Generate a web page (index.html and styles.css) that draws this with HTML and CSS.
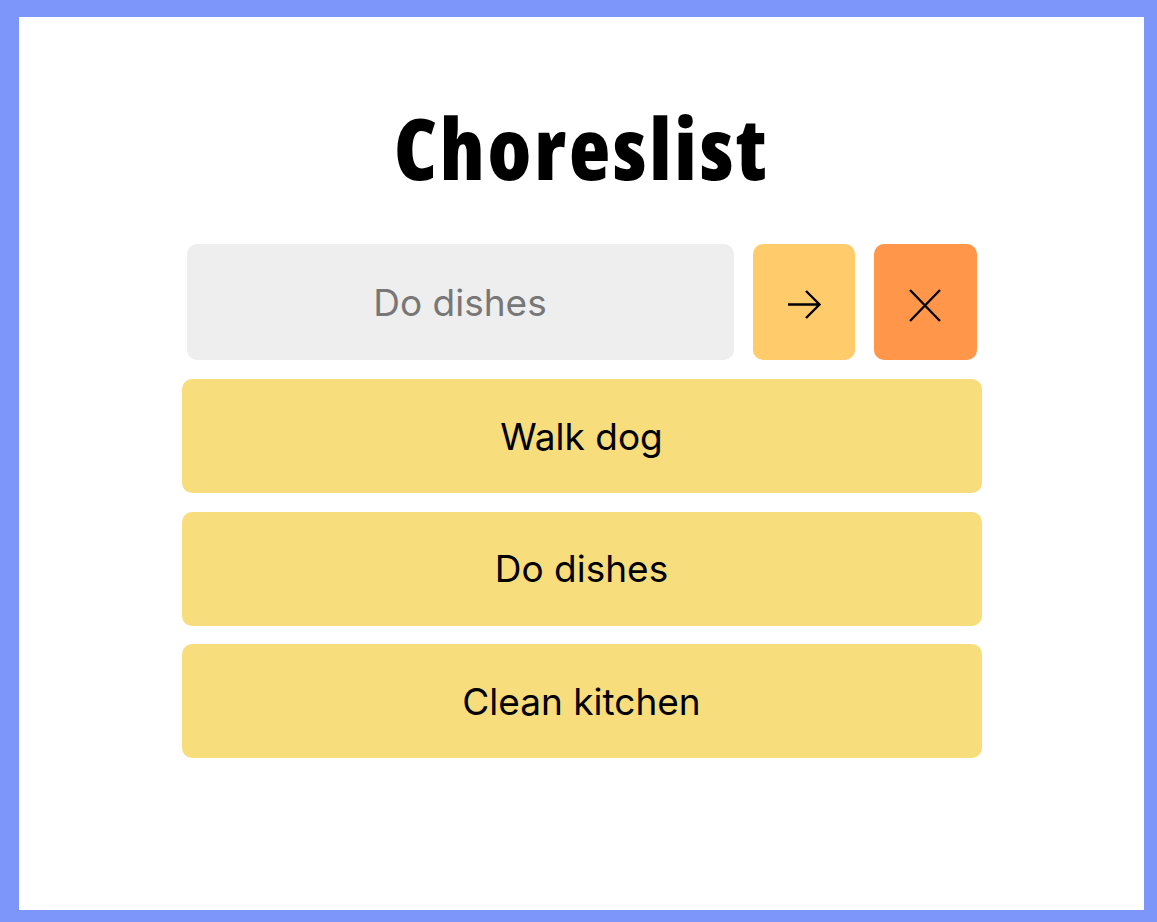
FILE: index.html
```html
<!DOCTYPE html>
<html lang="en">
<head>
<meta charset="utf-8">
<title>Choreslist</title>
<link rel="stylesheet" href="styles.css">
</head>
<body>
<main class="app">
  <h1 class="title">Choreslist</h1>
  <div class="entry">
    <input class="entry-input" type="text" placeholder="Do dishes">
    <button class="btn btn-add" aria-label="Add">
      <svg class="icon" width="40" height="40" viewBox="0 0 40 40" fill="none" stroke="#000" stroke-width="2.4" stroke-linecap="butt" stroke-linejoin="miter"><path d="M4 22.5h31M22 9l13.5 13.5L22 36"/></svg>
    </button>
    <button class="btn btn-clear" aria-label="Clear">
      <svg class="icon" width="40" height="40" viewBox="0 0 40 40" fill="none" stroke="#000" stroke-width="2.3" stroke-linecap="butt"><path d="M5 8l30 31M35 8L5 39"/></svg>
    </button>
  </div>
  <ul class="list">
    <li class="item">Walk dog</li>
    <li class="item">Do dishes</li>
    <li class="item">Clean kitchen</li>
  </ul>
</main>
</body>
</html>
```
FILE: styles.css
```css
* { box-sizing: border-box; }
html, body { margin: 0; padding: 0; }
body {
  width: 1157px;
  height: 922px;
  border-style: solid;
  border-color: #7c96fa;
  border-width: 17px 13px 12px 19px;
  background: #fff;
  font-family: Inter, "Noto Sans", sans-serif;
}
.app {
  width: 800px;
  margin: 0 auto;
  padding-top: 80px;
}
.title {
  margin: 0;
  text-align: center;
  font-family: "Open Sans", sans-serif;
  font-weight: 800;
  font-stretch: 82%;
  font-size: 85px;
  line-height: 100px;
  letter-spacing: 2.8px;
  color: #000;
}
.entry {
  display: flex;
  gap: 19px;
  margin: 47px 5px 0;
  height: 116px;
}
.entry-input {
  width: 547px;
  border: none;
  border-radius: 10px;
  background: #eeeeee;
  font-family: Inter, sans-serif;
  font-size: 37px;
  text-align: center;
  color: #000;
  outline: none;
  padding: 0;
}
.entry-input::placeholder { color: #777; }
.btn {
  flex: 1;
  border: none;
  border-radius: 10px;
  display: flex;
  align-items: center;
  justify-content: center;
  padding: 0;
}
.icon { overflow: visible; }
.btn-add { background: #ffcb6b; }
.btn-clear { background: #ff964a; }
.list {
  list-style: none;
  margin: 19px 0 0;
  padding: 0;
  display: flex;
  flex-direction: column;
  gap: 18.5px;
}
.item {
  height: 114px;
  border-radius: 10px;
  background: #f7dd7b;
  display: flex;
  align-items: center;
  justify-content: center;
  font-size: 37px;
  color: #000;
}
```
